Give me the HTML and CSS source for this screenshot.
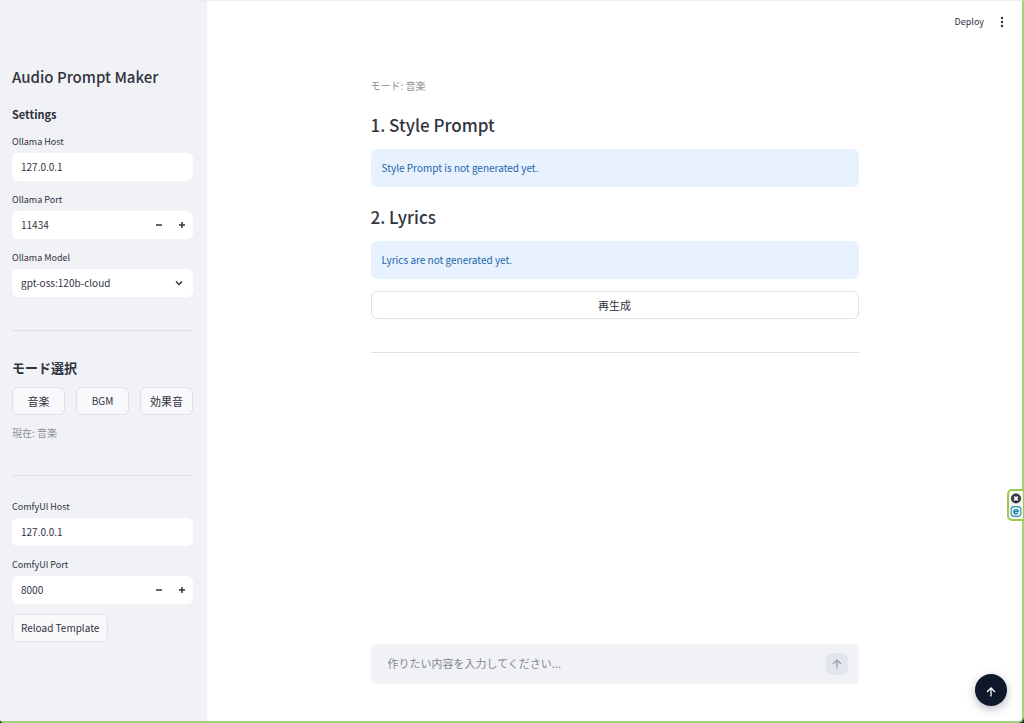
FILE: index.html
```
<!DOCTYPE html>
<html lang="ja">

<head>
    <meta charset="UTF-8">
    <meta name="viewport" content="width=device-width, initial-scale=1.0">
    <title>Audio Prompt Maker</title>
    <link rel="stylesheet" href="styles.css">
</head>

<body>

    <div class="app">
        <!-- Sidebar -->
        <aside class="sidebar">
            <h1>Audio Prompt Maker</h1>
            <h3>Settings</h3>

            <div class="field">
                <label for="ollama-host">Ollama Host</label>
                <input class="control" type="text" id="ollama-host" value="127.0.0.1">
            </div>

            <div class="field">
                <label for="ollama-port">Ollama Port</label>
                <div class="control number">
                    <input type="number" id="ollama-port" value="11434">
                    <button type="button" aria-label="Decrease Ollama Port">
                        <svg viewBox="0 0 8 8"><path d="M1 4h6"/></svg>
                    </button>
                    <button type="button" aria-label="Increase Ollama Port">
                        <svg viewBox="0 0 8 8"><path d="M1 4h6M4 1v6"/></svg>
                    </button>
                </div>
            </div>

            <div class="field">
                <label for="ollama-model">Ollama Model</label>
                <div class="select">
                    <select class="control" id="ollama-model">
                        <option>gpt-oss:120b-cloud</option>
                    </select>
                    <svg class="chevron" viewBox="0 0 8 8"><path d="M1 2.5l3 3 3-3"/></svg>
                </div>
            </div>

            <hr>

            <h3 class="mode-title">モード選択</h3>
            <div class="modes">
                <button type="button" class="button">音楽</button>
                <button type="button" class="button latin">BGM</button>
                <button type="button" class="button">効果音</button>
            </div>
            <p class="caption">現在: 音楽</p>

            <hr class="second">

            <div class="field">
                <label for="comfy-host">ComfyUI Host</label>
                <input class="control" type="text" id="comfy-host" value="127.0.0.1">
            </div>

            <div class="field">
                <label for="comfy-port">ComfyUI Port</label>
                <div class="control number">
                    <input type="number" id="comfy-port" value="8000">
                    <button type="button" aria-label="Decrease ComfyUI Port">
                        <svg viewBox="0 0 8 8"><path d="M1 4h6"/></svg>
                    </button>
                    <button type="button" aria-label="Increase ComfyUI Port">
                        <svg viewBox="0 0 8 8"><path d="M1 4h6M4 1v6"/></svg>
                    </button>
                </div>
            </div>

            <button type="button" class="button latin">Reload Template</button>
        </aside>

        <!-- Main column -->
        <div class="page">
            <header class="toolbar">
                <button type="button" class="deploy">Deploy</button>
                <button type="button" class="menu" aria-label="Menu">
                    <svg viewBox="0 0 12 12"><circle cx="6" cy="2" r="1.2"/><circle cx="6" cy="6" r="1.2"/><circle cx="6" cy="10" r="1.2"/></svg>
                </button>
            </header>

            <main class="content">
                <p class="caption">モード: 音楽</p>
                <h2>1. Style Prompt</h2>
                <div class="alert">Style Prompt is not generated yet.</div>
                <h2>2. Lyrics</h2>
                <div class="alert">Lyrics are not generated yet.</div>
                <button type="button" class="button wide">再生成</button>
                <hr>
            </main>

            <form class="chat">
                <input type="text" aria-label="作りたい内容" placeholder="作りたい内容を入力してください...">
                <button type="button" aria-label="Send" disabled>
                    <svg viewBox="0 0 10 10"><path d="M5 9.5V1M1 5l4-4 4 4"/></svg>
                </button>
            </form>
        </div>
    </div>

    <!-- Floating widgets -->
    <div class="extension">
        <svg viewBox="0 0 12 12">
            <circle cx="6" cy="6" r="5.4" fill="#33363b"/>
            <path d="M4 4l4 4M8 4l-4 4" stroke="#fff" stroke-width="1.8"/>
        </svg>
        <svg viewBox="0 0 12 12">
            <rect x="0.7" y="0.7" width="10.6" height="10.6" rx="3.5" fill="#e6f5f9" stroke="#2b91ad" stroke-width="1.2"/>
            <path d="M3.8 6.2h4.6A2.4 2.4 0 1 0 7.9 7.7" fill="none" stroke="#167f9c" stroke-width="1.5"/>
        </svg>
    </div>
    <button type="button" class="to-top" aria-label="Back to top">
        <svg viewBox="0 0 10 10"><path d="M5 9.5V1M1 5l4-4 4 4"/></svg>
    </button>

</body>

</html>
```
FILE: styles.css
```
/* General Page Styles */
* {
    box-sizing: border-box;
}

body {
    margin: 0;
    background-color: #12343a;
    color: #31333f;
    font-family: "Noto Sans CJK JP", sans-serif;
    font-size: 10px;
    line-height: 16px;
}

h1, h2, h3, p {
    margin: 0;
}

h1 {
    font-size: 15px;
    line-height: 20px;
    font-weight: 500;
    margin-bottom: 19px;
}

h2 {
    font-size: 17px;
    line-height: 24px;
    font-weight: 500;
    margin-bottom: 12px;
}

h3 {
    font-size: 11px;
    line-height: 16px;
    font-weight: 700;
    margin-bottom: 11px;
}

hr {
    width: 100%;
    height: 1px;
    margin: 33px 0 29px;
    border: 0;
    background-color: #dddfe4;
}

button, input, select {
    font: inherit;
    color: inherit;
}

button {
    padding: 0;
    border: 0;
    background: none;
    cursor: pointer;
}

svg {
    display: block;
}

.app {
    display: flex;
    min-height: 100vh;
    overflow: hidden;
    background-color: #fff;
    border-top: 1px solid #ededef;
    border-right: 2px solid #a5d17a;
    border-bottom: 2px solid #a5d17a;
    border-radius: 0 0 6px 4px;
}

/* Sidebar */
.sidebar {
    flex: 0 0 207px;
    padding: 66px 14px 20px 12px;
    background-color: #f0f2f6;
}

.field {
    margin-bottom: 10px;
}

.field label {
    display: block;
    margin-bottom: 3px;
    font-size: 9px;
    line-height: 17px;
}

.control {
    display: block;
    width: 100%;
    height: 28px;
    padding: 0 9px;
    border: 0;
    border-radius: 6px;
    background-color: #fff;
}

input.control {
    padding-bottom: 2px;
}

.number {
    display: flex;
    padding-right: 0;
}

.number input {
    flex: 1;
    min-width: 0;
    padding: 0;
    border: 0;
    background: none;
    appearance: textfield;
}

.number input::-webkit-inner-spin-button {
    display: none;
}

.number button {
    display: grid;
    place-items: center;
    width: 23px;
}

.number svg, .chevron {
    width: 8px;
    height: 8px;
    fill: none;
    stroke: #31333f;
    stroke-width: 1.5;
}

.select {
    position: relative;
}

.select select {
    appearance: none;
}

.chevron {
    position: absolute;
    top: 10px;
    right: 10px;
    pointer-events: none;
}

.sidebar .mode-title {
    font-size: 13px;
}

.modes {
    display: grid;
    grid-template-columns: repeat(3, 1fr);
    gap: 11px;
    margin-bottom: 10px;
}

.button {
    height: 28px;
    padding: 0 8px;
    border: 1px solid #dfe1e6;
    border-radius: 6px;
    background-color: #f9f9fb;
    font-size: 11px;
}

.latin {
    font-size: 10px;
}

.caption {
    color: #8d8f97;
}

.sidebar .second {
    margin: 34px 0 22px;
}

/* Main column */
.page {
    flex: 1;
    display: flex;
    flex-direction: column;
    min-width: 0;
}

.toolbar {
    display: flex;
    justify-content: flex-end;
    align-items: center;
    gap: 12px;
    height: 42px;
    padding-right: 14px;
}

.deploy {
    font-size: 9px;
}

.menu svg {
    width: 12px;
    height: 12px;
    fill: #31333f;
}

.content, .chat {
    width: calc(100% - 32px);
    max-width: 488px;
    margin: 0 auto;
}

.content {
    flex: 1;
    padding-top: 35px;
}

.content .caption {
    margin-bottom: 19px;
}

.alert {
    margin-bottom: 18px;
    padding: 11px;
    border-radius: 6px;
    background-color: #e8f2ff;
    color: #1c65ab;
}

.alert + .button {
    margin-top: -6px;
}

.wide {
    width: 100%;
    background-color: #fff;
}

.chat {
    display: flex;
    align-items: center;
    height: 40px;
    margin-bottom: 37px;
    padding: 0 11px 0 17px;
    border-radius: 6px;
    background-color: #f0f2f6;
}

.chat input {
    flex: 1;
    min-width: 0;
    padding: 0 0 2px;
    border: 0;
    background: none;
    font-size: 11px;
}

.chat input::placeholder {
    color: #85878f;
}

.chat button {
    display: grid;
    place-items: center;
    width: 22px;
    height: 22px;
    border-radius: 6px;
    background-color: #e2e7ee;
}

.chat svg, .to-top svg {
    width: 10px;
    height: 10px;
    fill: none;
    stroke: #9da2ac;
    stroke-width: 1.3;
}

/* Floating widgets */
.to-top {
    position: fixed;
    right: 17px;
    bottom: 17px;
    display: grid;
    place-items: center;
    width: 32px;
    height: 32px;
    border-radius: 50%;
    background-color: #0f172a;
    box-shadow: 0 3px 10px rgba(15, 23, 42, 0.3);
}

.to-top svg {
    margin-top: 3px;
    stroke: #fff;
}

.extension {
    position: fixed;
    right: 0;
    bottom: 202px;
    display: grid;
    gap: 2px;
    padding: 2px 1px;
    border: 2px solid #9ccb4f;
    border-right-width: 1px;
    border-radius: 5px 0 0 5px;
    background-color: #f4f5f5;
}

.extension svg {
    width: 12px;
    height: 11px;
}
```
